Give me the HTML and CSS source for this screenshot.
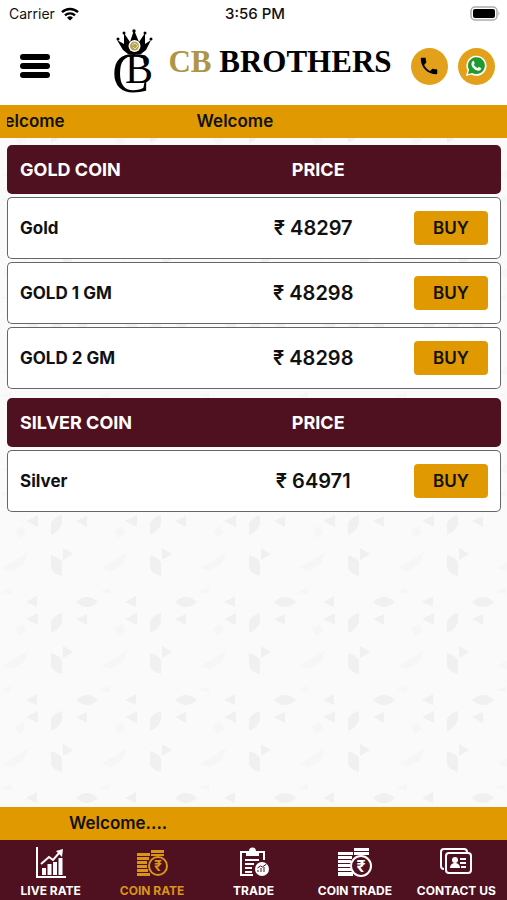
FILE: index.html
```html
<!DOCTYPE html>
<html lang="en">
<head>
  <meta charset="UTF-8" />
  <meta name="viewport" content="width=device-width, initial-scale=1.0"/>
  <title>CB Brothers - Coin Rate</title>
  <link rel="stylesheet" href="styles.css">
</head>
<body>

  <div class="status-bar">
    <div class="carrier">
      <span>Carrier</span>
      <svg width="18" height="14" viewBox="0 0 18 14" fill="none" stroke="#000" stroke-width="2.4">
        <path d="M1 5.2a11.5 11.5 0 0 1 16 0"/>
        <path d="M4 8.4a7.2 7.2 0 0 1 10 0"/>
        <path d="M9 13.6 6 10.7a4.3 4.3 0 0 1 6 0z" fill="#000" stroke="none"/>
      </svg>
    </div>
    <span class="clock">3:56 PM</span>
    <div class="battery">
      <svg width="31" height="15" viewBox="0 0 31 15">
        <rect x="1" y="1" width="26" height="13" rx="4" fill="#fff" stroke="#aaa" stroke-width="1.5"/>
        <rect x="3" y="3" width="22" height="9" rx="2" fill="#000"/>
        <path d="M28.5 5.2q2 2.3 0 4.6z" fill="#aaa"/>
      </svg>
    </div>
  </div>

  <header class="header">
    <button type="button" class="menu-btn" aria-label="Menu">
      <svg width="32" height="24" viewBox="0 0 32 24" stroke="#000" stroke-width="6" stroke-linecap="round">
        <path d="M4 3h24M4 12h24M4 21h24"/>
      </svg>
    </button>

    <a href="#" class="brand">
      <svg class="emblem" width="40" height="68" viewBox="0 0 40 68">
        <!-- crown -->
        <path d="M3 12l7 4V5l6 9 4-12 5 12 6-9v11l6-4-5 10-5 4H14l-5-4z"/>
        <circle cx="4" cy="11" r="1.500"/>
        <circle cx="10" cy="5" r="1.500"/>
        <circle cx="20" cy="3" r="1.700"/>
        <circle cx="31" cy="5" r="1.500"/>
        <circle cx="37" cy="11" r="1.500"/>
        <circle cx="20.500" cy="18" r="6" fill="#fff"/>
        <circle cx="20.500" cy="18" r="4.500" fill="#b5a45a"/>
        <path d="M18 17l3-2 3 3-3 3-2-2" fill="none" stroke="#e5dcae"/>
        <text class="mono-c" x="-2" y="64">C</text>
        <text class="mono-b" x="11" y="55">B</text>
      </svg>
      <span class="brand-name"><span class="brand-gold">CB</span> BROTHERS</span>
    </a>

    <div class="header-actions">
      <a href="tel:" class="round-btn" aria-label="Call">
        <svg width="22" height="22" viewBox="0 0 24 24">
          <path d="M6.620 10.790c1.440 2.830 3.760 5.140 6.590 6.590l2.200-2.200c.27-.27.67-.36 1.020-.24 1.120.37 2.330.57 3.570.57.55 0 1 .45 1 1V20c0 .55-.45 1-1 1-9.390 0-17-7.610-17-17 0-.55.45-1 1-1h3.500c.55 0 1 .45 1 1 0 1.250.2 2.450.57 3.570.11.35.03.74-.25 1.020z"/>
        </svg>
      </a>
      <a href="#" class="round-btn" aria-label="WhatsApp">
        <svg width="22" height="22" viewBox="0 0 24 24">
          <path d="M1 23l1.700-6.200A11 11 0 1 1 7 21.300z" fill="#fff"/>
          <path d="M3.200 20.800l1.300-4.600a9.200 9.200 0 1 1 3.300 3.300z" fill="#1f9a2c"/>
          <path d="M8.500 6.500c.5-.3 1-.2 1.200.3l.8 1.900c.1.400 0 .7-.9 1.700.9 1.800 2.200 3 4.200 3.900.9-1.200 1.200-1.400 1.600-1.200l2 1c.4.200.4.500.3 1-.3 1.500-1.800 2.200-3.100 2.100-3.800-.5-7-3.700-7.600-6.900-.1-1.500.5-3 1.500-3.800z" fill="#fff"/>
        </svg>
      </a>
    </div>
  </header>

  <div class="ticker">
    <div class="ticker-window">
      <div class="ticker-track">
        <span>Welcome</span>
        <span>Welcome</span>
      </div>
    </div>
  </div>

  <main class="rates">
    <table class="rate-table">
      <thead>
        <tr><th class="col-name">GOLD COIN</th><th class="col-price">PRICE</th><th class="col-buy"></th></tr>
      </thead>
      <tbody>
        <tr><td>Gold</td><td class="price">₹ 48297</td><td class="buy"><button type="button" class="buy-btn">BUY</button></td></tr>
        <tr><td>GOLD 1 GM</td><td class="price">₹ 48298</td><td class="buy"><button type="button" class="buy-btn">BUY</button></td></tr>
        <tr><td>GOLD 2 GM</td><td class="price">₹ 48298</td><td class="buy"><button type="button" class="buy-btn">BUY</button></td></tr>
      </tbody>
    </table>

    <table class="rate-table">
      <thead>
        <tr><th class="col-name">SILVER COIN</th><th class="col-price">PRICE</th><th class="col-buy"></th></tr>
      </thead>
      <tbody>
        <tr><td>Silver</td><td class="price">₹ 64971</td><td class="buy"><button type="button" class="buy-btn">BUY</button></td></tr>
      </tbody>
    </table>
  </main>

  <div class="ticker ticker-bottom">Welcome....</div>

  <nav class="tab-bar">
    <a href="#" class="tab">
      <svg width="32" height="32" viewBox="0 0 32 32" fill="currentColor">
        <path d="M1 0h2v29h28v2H1z"/>
        <path d="M7 21h4v7H7zM12.500 17h4v11h-4zM18 15h4v13h-4zM23.500 11h4v17h-4z"/>
        <path d="M6 17l8-7 4 3 7-8" fill="none" stroke="currentColor" stroke-width="2"/>
        <path d="M21 4l7-2-1 8z"/>
      </svg>
      LIVE RATE
    </a>
    <a href="#" class="tab active">
      <svg width="34" height="32" viewBox="0 0 34 32" fill="currentColor">
        <path d="M2 6h13v3H2zM2 10h12v3H2zM2 14h10v3H2zM2 18h10v3H2zM2 22h11v3H2zM2 26h13v3H2zM16 3h13v3H16zM16 7h13v2H16z"/>
        <circle cx="23" cy="19" r="9" fill="none" stroke="currentColor" stroke-width="2"/>
        <text class="rupee" x="23" y="24">₹</text>
      </svg>
      COIN RATE
    </a>
    <a href="#" class="tab">
      <svg width="32" height="32" viewBox="0 0 32 32" fill="currentColor">
        <path d="M8 5H3v23h12M21 5h5v8" fill="none" stroke="currentColor" stroke-width="2"/>
        <path d="M8 4h3a3.500 3.500 0 0 1 7 0h3v5H8z"/>
        <path d="M7 13h14M7 17h9M7 21h7M7 25h7" stroke="currentColor" stroke-width="2"/>
        <circle cx="24" cy="22" r="7"/>
        <path d="M20 25v-2M23 25v-4M26 25v-5M19.500 21l3-2 2 1 4-3" fill="none" stroke="#4f101f"/>
      </svg>
      TRADE
    </a>
    <a href="#" class="tab">
      <svg width="36" height="32" viewBox="0 0 36 32" fill="currentColor">
        <path d="M1 5h15v3H1zM1 9h14v3H1zM1 13h13v3H1zM1 17h12v3H1zM1 21h13v3H1zM1 25h15v4H1zM17 1h15v3H17zM17 5h15v3H17z"/>
        <circle cx="24" cy="19" r="10" fill="none" stroke="currentColor" stroke-width="2"/>
        <text class="rupee rupee-lg" x="24" y="25">₹</text>
      </svg>
      COIN TRADE
    </a>
    <a href="#" class="tab">
      <svg width="32" height="32" viewBox="0 0 32 32" fill="currentColor">
        <rect x="6" y="6" width="25" height="20" rx="3" fill="none" stroke="currentColor" stroke-width="2"/>
        <path d="M4 22a3 3 0 0 1-3-3V5a3 3 0 0 1 3-3h20a3 3 0 0 1 3 3" fill="none" stroke="currentColor" stroke-width="2"/>
        <circle cx="15" cy="13" r="3"/>
        <path d="M10 21q0-4 4-5h2q4 1 4 5z"/>
        <path d="M20 12h6M20 16h6M21 20h5" stroke="currentColor" stroke-width="2"/>
      </svg>
      CONTACT US
    </a>
  </nav>

</body>
</html>
```
FILE: styles.css
```css
* {
  box-sizing: border-box;
}
body {
  margin: 0;
  min-height: 100vh;
  display: flex;
  flex-direction: column;
  font-family: Inter, "Liberation Sans", sans-serif;
  color: #111;
  background-color: #fff;
}
a {
  color: inherit;
  text-decoration: none;
}
button {
  font-family: inherit;
  color: inherit;
  border: none;
  padding: 0;
  cursor: pointer;
}
svg {
  display: block;
}

/* status bar */
.status-bar {
  display: grid;
  grid-template-columns: 1fr auto 1fr;
  align-items: center;
  height: 27px;
  padding: 0 6px 0 9px;
  font-size: 14px;
}
.carrier {
  display: flex;
  align-items: center;
  gap: 6px;
}
.clock {
  font-size: 15px;
  font-weight: 500;
}
.battery {
  justify-self: end;
}

/* header */
.header {
  display: flex;
  align-items: center;
  justify-content: space-between;
  height: 78px;
  padding: 0 12px 0 19px;
}
.menu-btn {
  background: none;
}
.brand {
  display: flex;
  align-items: center;
  gap: 14px;
  margin-left: 44px;
  padding-bottom: 8px;
}
.brand-name {
  font-family: "Liberation Serif", serif;
  font-size: 31px;
  font-weight: bold;
  color: #000;
  white-space: nowrap;
}
.brand-gold {
  color: #ad9645;
}
.emblem {
  overflow: visible;
}
.mono-c,
.mono-b {
  font-family: "Liberation Serif", serif;
}
.mono-c {
  font-size: 56px;
}
.mono-b {
  font-size: 42px;
}
.header-actions {
  display: flex;
  gap: 10px;
}
.round-btn {
  display: flex;
  align-items: center;
  justify-content: center;
  width: 37px;
  height: 37px;
  border-radius: 50%;
  background-color: #e3a11b;
}

/* scrolling messages */
.ticker {
  height: 33px;
  padding: 0 7px;
  background-color: #e09900;
  font-size: 17px;
  font-weight: 600;
  line-height: 33px;
}
.ticker-window {
  overflow: hidden;
}
.ticker-track {
  display: flex;
  gap: 132px;
  margin-left: -19px;
}
.ticker-bottom {
  padding-left: 69px;
}

/* rates */
.rates {
  flex: 1;
  display: flex;
  flex-direction: column;
  gap: 3px;
  padding: 4px 6px 8px 7px;
  background-color: #fafafa;
  background-image: url("data:image/svg+xml,%3Csvg xmlns='http://www.w3.org/2000/svg' width='99' height='98'%3E%3Cg fill='%23f0f0f0'%3E%3Cpath d='M26 11l12-6v12zM62 5v9q-3 8-11 11V13q3-6 11-8zM76 11l11-5v11zM63 38l10 6-10 6zM51 45q10 3 11 8v13q-10-3-11-8zM26 92l11-6v11zM76 92q11-10 22 0-11 10-22 0z'/%3E%3C/g%3E%3Cpath d='M2 58l12-7 14-9-4 12-12 7zM15 20l8-4 3 7-7 5zM0 82l11-4v6z' fill='%23f6f6f6'/%3E%3C/svg%3E");
  background-position: 0 78px;
}
.rate-table {
  width: 100%;
  table-layout: fixed;
  border-collapse: separate;
  border-spacing: 0 3px;
}
.rate-table th {
  height: 49px;
  padding: 0;
  background-color: #4f101f;
  color: #fff;
  font-size: 18px;
  font-weight: 700;
}
.rate-table .col-name {
  width: 47%;
  padding-left: 13px;
  text-align: left;
}
.col-price {
  width: 32%;
}
.col-buy {
  width: 21%;
}
.rate-table td {
  height: 62px;
  padding: 0;
  background-color: #fff;
  border: 1px solid #666;
  border-width: 1px 0;
  font-size: 17px;
  font-weight: 700;
}
.rate-table td:first-child {
  padding-left: 12px;
  border-left-width: 1px;
}
.rate-table td:last-child {
  border-right-width: 1px;
}
.rate-table tr > :first-child {
  border-radius: 5px 0 0 5px;
}
.rate-table tr > :last-child {
  border-radius: 0 5px 5px 0;
}
.rate-table .price {
  padding-right: 10px;
  font-size: 20px;
  font-weight: 600;
  text-align: center;
}
.rate-table .buy {
  padding-right: 12px;
  text-align: right;
}
.buy-btn {
  width: 74px;
  height: 34px;
  border-radius: 4px;
  background-color: #e09900;
  font-size: 17px;
  font-weight: 600;
}

/* bottom tabs */
.tab-bar {
  display: flex;
  height: 60px;
  background-color: #4f101f;
  color: #fff;
}
.tab {
  flex: 1 1 0;
  display: flex;
  flex-direction: column;
  align-items: center;
  gap: 4px;
  padding-top: 7px;
  font-size: 12px;
  font-weight: 700;
  line-height: 16px;
  white-space: nowrap;
}
.tab.active {
  color: #d9951a;
}
.rupee {
  font-size: 14px;
  text-anchor: middle;
}
.rupee-lg {
  font-size: 16px;
}
```
